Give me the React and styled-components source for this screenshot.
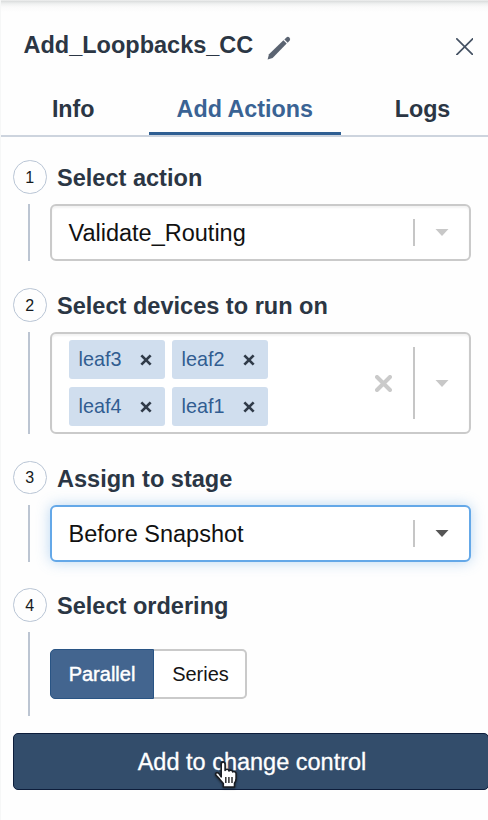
import React from 'react';
import styled, { createGlobalStyle, css } from 'styled-components';

const GlobalStyle = createGlobalStyle`
  * { box-sizing: border-box; }
  body {
    margin: 0;
    overflow: hidden;
    background: #fefefe;
    font-family: "Liberation Sans", Arial, sans-serif;
  }
  button { font-family: inherit; padding: 0; margin: 0; }
  svg { display: block; flex: none; }
`;

const Panel = styled.main`
  width: 488px;
  height: 820px;
  overflow: hidden;
  border-left: 1px solid #f6f7f7;
  background: linear-gradient(#fafafa 0, #d9dbdb 1px, #e2e4e4 2px, #f0f1f1 4px, #fafafa 7px, #fefefe 12px);
`;

const Header = styled.header`
  display: flex;
  align-items: center;
  height: 81px;
  padding: 11px 15px 0 22.5px;
`;

const Title = styled.h1`
  margin: 0 0 2px;
  font-size: 23.5px;
  line-height: 28px;
  font-weight: 700;
  color: #2b3644;
`;

const IconButton = styled.button`
  display: flex;
  border: 0;
  background: none;
  margin-left: ${(p) => p.$left || '0'};
  margin-top: ${(p) => p.$top || '0'};
`;

const Tabs = styled.nav`
  display: flex;
  height: 56px;
  width: 503px;
  border-bottom: 2px solid #cdd4de;
`;

const Tab = styled.button`
  width: ${(p) => p.$width};
  height: 54px;
  padding-top: 5px;
  padding-right: ${(p) => p.$nudge || '0'};
  border: 0;
  border-bottom: 3px solid ${(p) => (p.$active ? '#2f5f93' : 'transparent')};
  background: none;
  font-size: 23.3px;
  font-weight: 700;
  color: ${(p) => (p.$active ? '#3a6394' : '#2b3644')};
`;

const Steps = styled.div`
  padding: 23px 17px 0 12px;
`;

const Step = styled.section`
  display: grid;
  grid-template-columns: 34px 1fr;
  grid-template-rows: 34px ${(p) => p.$body};
  row-gap: 10px;
  margin-bottom: ${(p) => p.$after};
`;

const StepNumber = styled.span`
  display: flex;
  align-items: center;
  justify-content: center;
  width: 33.5px;
  height: 33.5px;
  padding-top: 2px;
  border: 1.5px solid #b9c5d5;
  border-radius: 50%;
  font-size: 16px;
  color: #151a20;
`;

const StepTitle = styled.h2`
  margin: 0 0 0 10px;
  padding-top: 1px;
  font-size: 23.55px;
  line-height: 34px;
  font-weight: 700;
  color: #2b3644;
`;

const Rail = styled.div`
  width: 2px;
  margin-left: 15px;
  background: #bcc5d2;
`;

const StepBody = styled.div`
  display: flex;
  align-items: center;
  margin-left: 3px;
`;

const SelectBox = styled.div`
  display: flex;
  align-items: center;
  width: 420.5px;
  height: 100%;
  flex: none;
  padding-left: 16.5px;
  border: 2px solid #cacaca;
  border-radius: 6px;
  background: #fff;
  font-size: 23.5px;
  color: #111;
  box-shadow: inset 0 2px 2px rgba(0, 0, 0, 0.05);
  ${(p) => p.$focused && css`
    border-color: #64a8e8;
    box-shadow: 0 0 14px rgba(90, 160, 225, 0.42);
  `}
`;

const SelectValue = styled.div`
  flex: 1;
  padding-top: 2px;
`;

const Separator = styled.span`
  width: 1.5px;
  height: ${(p) => p.$height};
  background: #c6c6c6;
`;

const Arrow = styled.span`
  display: flex;
  justify-content: center;
  width: 54px;
  color: ${(p) => (p.$dark ? '#555' : '#c8c8c8')};
`;

const Chips = styled.div`
  flex: 1;
  display: grid;
  grid-template-columns: 96px 96px;
  grid-auto-rows: 38.5px;
  gap: 8.5px 7px;
`;

const Chip = styled.span`
  display: flex;
  align-items: center;
  justify-content: space-between;
  padding: 0 12.5px 1px 10px;
  border-radius: 3px;
  background: #d0deee;
  font-size: 19.8px;
  color: #315d91;
  svg { margin-top: 2px; }
`;

const ClearSlot = styled.span`
  display: flex;
  margin-right: 21px;
`;

const Segments = styled.div`
  display: flex;
  height: 49.5px;
`;

const Segment = styled.button`
  width: ${(p) => p.$width};
  border: 2px solid #cacaca;
  border-left: 0;
  border-radius: 0 5px 5px 0;
  background: #fff;
  color: #151515;
  font-size: 20px;
  padding-left: 2px;
  ${(p) => p.$active && css`
    padding-left: 0;
    border: 1px solid #295484;
    border-radius: 5px 0 0 5px;
    background: #43658f;
    color: #fff;
    -webkit-text-stroke: 0.45px #fff;
  `}
`;

const Footer = styled.footer`
  position: relative;
  margin: 17px 0 0 12px;
`;

const SubmitButton = styled.button`
  width: 476px;
  height: 57px;
  padding: 2px 0 0 2px;
  border: 1px solid #0d1d3b;
  border-radius: 5px;
  background: #334d6b;
  color: #fff;
  font-size: 23.5px;
  -webkit-text-stroke: 0.3px #fff;
`;

const Pointer = styled.svg`
  position: absolute;
  left: 200px;
  top: 27px;
  filter: drop-shadow(0 1px 1px rgba(0, 0, 0, 0.45));
`;

const Pencil = () => (
  <svg width="24" height="24" viewBox="0 0 24 24" fill="#5a6371">
    <path d="M0.6 23.4 L2 18.2 L16.4 4.3 L19.7 7.6 L5.6 21.9 Z" />
    <path d="M17.4 3.4 L19.4 1.4 Q21 .2 22.4 1.6 Q23.8 3 22.7 4.6 L20.7 6.7 Z" />
  </svg>
);

const Cross = ({ size, weight, color, cap = 'round' }) => (
  <svg width={size} height={size} viewBox={`0 0 ${size} ${size}`}>
    <path
      d={`M${weight / 2} ${weight / 2}L${size - weight / 2} ${size - weight / 2}M${size - weight / 2} ${weight / 2}L${weight / 2} ${size - weight / 2}`}
      stroke={color}
      strokeWidth={weight}
      strokeLinecap={cap}
    />
  </svg>
);

const Caret = () => (
  <svg width="14" height="7" viewBox="0 0 14 7" fill="currentColor">
    <path d="M0.5 0H13.5L7 7Z" />
  </svg>
);

const HandPointer = () => (
  <Pointer width="26" height="30" viewBox="0 0 26 30">
    <path
      d="M8.2 16.8V4.5Q8.2 2 10.1 2Q12.1 2 12.1 4.5V10.4Q12.8 9.2 14.2 9.3Q15.7 9.4 15.9 11Q16.7 10 18.1 10.2Q19.5 10.4 19.7 12Q20.5 11.3 21.7 11.7Q23.2 12.2 23.1 14V18.6Q23 21.1 21.5 23.3V27H10.3V23.5L6.4 18.9L3 15.3Q2 13.5 3.5 12.8Q4.9 12.2 6.5 14.2Z"
      fill="#fff"
      stroke="#1a1d22"
      strokeWidth="1.6"
      strokeLinejoin="round"
    />
    <path d="M12.8 17V23M15.9 17V23M19 17V23" stroke="#222" strokeWidth="1.4" />
  </Pointer>
);

const StepSection = ({ number, title, body, after, children }) => (
  <Step $body={body} $after={after}>
    <StepNumber>{number}</StepNumber>
    <StepTitle>{title}</StepTitle>
    <Rail />
    <StepBody>{children}</StepBody>
  </Step>
);

const Select = ({ value, focused }) => (
  <SelectBox $focused={focused}>
    <SelectValue>{value}</SelectValue>
    <Separator $height="27px" />
    <Arrow $dark={focused}><Caret /></Arrow>
  </SelectBox>
);

const devices = ['leaf3', 'leaf2', 'leaf4', 'leaf1'];

export default function App() {
  return (
    <>
      <GlobalStyle />
      <Panel>
        <Header>
          <Title>Add_Loopbacks_CC</Title>
          <IconButton $left="13.5px" $top="4px" aria-label="Edit name"><Pencil /></IconButton>
          <IconButton $left="auto" $top="1px" aria-label="Close">
            <Cross size={17.5} weight={1.7} color="#455263" />
          </IconButton>
        </Header>
        <Tabs>
          <Tab $width="147.5px" $nudge="3px">Info</Tab>
          <Tab $width="192.5px" $active>Add Actions</Tab>
          <Tab $width="163px">Logs</Tab>
        </Tabs>
        <Steps>
          <StepSection number="1" title="Select action" body="57px" after="27px">
            <Select value="Validate_Routing" />
          </StepSection>
          <StepSection number="2" title="Select devices to run on" body="102px" after="26.5px">
            <SelectBox>
              <Chips>
                {devices.map((name) => (
                  <Chip key={name}>
                    {name}
                    <Cross size={12} weight={2.7} color="#303b49" cap="butt" />
                  </Chip>
                ))}
              </Chips>
              <ClearSlot><Cross size={17} weight={4} color="#cacaca" /></ClearSlot>
              <Separator $height="72px" />
              <Arrow><Caret /></Arrow>
            </SelectBox>
          </StepSection>
          <StepSection number="3" title="Assign to stage" body="57px" after="26.5px">
            <Select value="Before Snapshot" focused />
          </StepSection>
          <StepSection number="4" title="Select ordering" body="84px" after="0">
            <Segments>
              <Segment $width="104px" $active>Parallel</Segment>
              <Segment $width="93px">Series</Segment>
            </Segments>
          </StepSection>
        </Steps>
        <Footer>
          <SubmitButton>Add to change control</SubmitButton>
          <HandPointer />
        </Footer>
      </Panel>
    </>
  );
}
